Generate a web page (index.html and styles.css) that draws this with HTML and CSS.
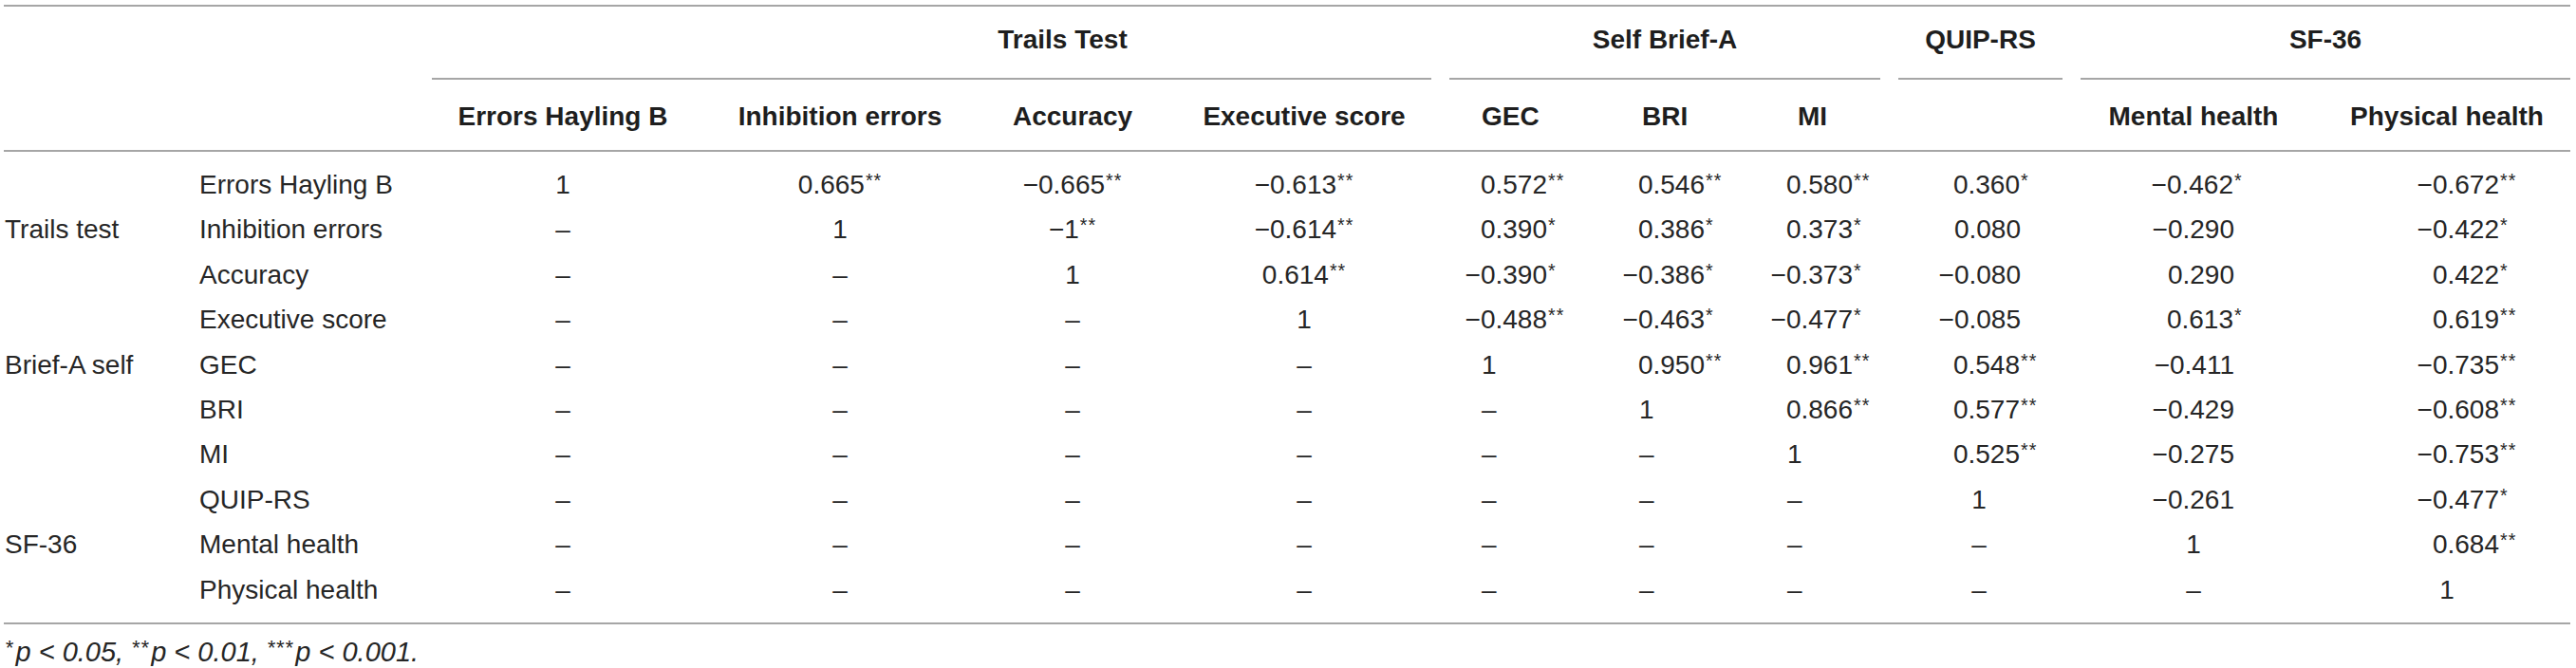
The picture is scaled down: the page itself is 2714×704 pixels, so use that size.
FILE: index.html
```html
<!DOCTYPE html>
<html lang="en">
<head>
<meta charset="utf-8">
<title>Correlation table</title>
<link rel="stylesheet" href="styles.css">
</head>
<body>
<div class="tbl">
  <div class="grp-row">
    <div class="grp-empty"></div>
    <div class="grp trails"><div class="gt">Trails Test</div><div class="rule"></div></div>
    <div class="grp self"><div class="gt">Self Brief-A</div><div class="rule"></div></div>
    <div class="grp quip"><div class="gt">QUIP-RS</div><div class="rule"></div></div>
    <div class="grp sf"><div class="gt">SF-36</div><div class="rule"></div></div>
  </div>
  <div class="hdr-row">
    <div></div><div></div>
    <div class="ctr">Errors Hayling B</div>
    <div class="ctr">Inhibition errors</div>
    <div class="ctr">Accuracy</div>
    <div class="ctr">Executive score</div>
    <div class="hl">GEC</div>
    <div class="hl">BRI</div>
    <div class="hl">MI</div>
    <div></div>
    <div class="ctr">Mental health</div>
    <div class="ctr ph-h">Physical health</div>
  </div>
  <div class="body">
    <div class="row">
      <div class="gl"></div><div class="rl">Errors Hayling B</div>
      <div class="ctr">1</div>
      <div class="ctr">0.665<sup>**</sup></div>
      <div class="ctr">−0.665<sup>**</sup></div>
      <div class="ctr">−0.613<sup>**</sup></div>
      <div class="g n">0.572<sup>**</sup></div>
      <div class="br n">0.546<sup>**</sup></div>
      <div class="mi n">0.580<sup>**</sup></div>
      <div class="q n">0.360<sup>*</sup></div>
      <div class="mh n">−0.462<sup>*</sup></div>
      <div class="ph n">−0.672<sup>**</sup></div>
    </div>
    <div class="row">
      <div class="gl">Trails test</div><div class="rl">Inhibition errors</div>
      <div class="ctr">–</div>
      <div class="ctr">1</div>
      <div class="ctr">−1<sup>**</sup></div>
      <div class="ctr">−0.614<sup>**</sup></div>
      <div class="g n">0.390<sup>*</sup></div>
      <div class="br n">0.386<sup>*</sup></div>
      <div class="mi n">0.373<sup>*</sup></div>
      <div class="q n">0.080</div>
      <div class="mh n">−0.290</div>
      <div class="ph n">−0.422<sup>*</sup></div>
    </div>
    <div class="row">
      <div class="gl"></div><div class="rl">Accuracy</div>
      <div class="ctr">–</div>
      <div class="ctr">–</div>
      <div class="ctr">1</div>
      <div class="ctr">0.614<sup>**</sup></div>
      <div class="g n">−0.390<sup>*</sup></div>
      <div class="br n">−0.386<sup>*</sup></div>
      <div class="mi n">−0.373<sup>*</sup></div>
      <div class="q n">−0.080</div>
      <div class="mh n">0.290</div>
      <div class="ph n">0.422<sup>*</sup></div>
    </div>
    <div class="row">
      <div class="gl"></div><div class="rl">Executive score</div>
      <div class="ctr">–</div>
      <div class="ctr">–</div>
      <div class="ctr">–</div>
      <div class="ctr">1</div>
      <div class="g n">−0.488<sup>**</sup></div>
      <div class="br n">−0.463<sup>*</sup></div>
      <div class="mi n">−0.477<sup>*</sup></div>
      <div class="q n">−0.085</div>
      <div class="mh n">0.613<sup>*</sup></div>
      <div class="ph n">0.619<sup>**</sup></div>
    </div>
    <div class="row">
      <div class="gl">Brief-A self</div><div class="rl">GEC</div>
      <div class="ctr">–</div>
      <div class="ctr">–</div>
      <div class="ctr">–</div>
      <div class="ctr">–</div>
      <div class="g u">1</div>
      <div class="br n">0.950<sup>**</sup></div>
      <div class="mi n">0.961<sup>**</sup></div>
      <div class="q n">0.548<sup>**</sup></div>
      <div class="mh n">−0.411</div>
      <div class="ph n">−0.735<sup>**</sup></div>
    </div>
    <div class="row">
      <div class="gl"></div><div class="rl">BRI</div>
      <div class="ctr">–</div>
      <div class="ctr">–</div>
      <div class="ctr">–</div>
      <div class="ctr">–</div>
      <div class="g u">–</div>
      <div class="br u">1</div>
      <div class="mi n">0.866<sup>**</sup></div>
      <div class="q n">0.577<sup>**</sup></div>
      <div class="mh n">−0.429</div>
      <div class="ph n">−0.608<sup>**</sup></div>
    </div>
    <div class="row">
      <div class="gl"></div><div class="rl">MI</div>
      <div class="ctr">–</div>
      <div class="ctr">–</div>
      <div class="ctr">–</div>
      <div class="ctr">–</div>
      <div class="g u">–</div>
      <div class="br u">–</div>
      <div class="mi u">1</div>
      <div class="q n">0.525<sup>**</sup></div>
      <div class="mh n">−0.275</div>
      <div class="ph n">−0.753<sup>**</sup></div>
    </div>
    <div class="row">
      <div class="gl"></div><div class="rl">QUIP-RS</div>
      <div class="ctr">–</div>
      <div class="ctr">–</div>
      <div class="ctr">–</div>
      <div class="ctr">–</div>
      <div class="g u">–</div>
      <div class="br u">–</div>
      <div class="mi u">–</div>
      <div class="q u">1</div>
      <div class="mh n">−0.261</div>
      <div class="ph n">−0.477<sup>*</sup></div>
    </div>
    <div class="row">
      <div class="gl">SF-36</div><div class="rl">Mental health</div>
      <div class="ctr">–</div>
      <div class="ctr">–</div>
      <div class="ctr">–</div>
      <div class="ctr">–</div>
      <div class="g u">–</div>
      <div class="br u">–</div>
      <div class="mi u">–</div>
      <div class="q u">–</div>
      <div class="mh u">1</div>
      <div class="ph n">0.684<sup>**</sup></div>
    </div>
    <div class="row">
      <div class="gl"></div><div class="rl">Physical health</div>
      <div class="ctr">–</div>
      <div class="ctr">–</div>
      <div class="ctr">–</div>
      <div class="ctr">–</div>
      <div class="g u">–</div>
      <div class="br u">–</div>
      <div class="mi u">–</div>
      <div class="q u">–</div>
      <div class="mh u">–</div>
      <div class="ph u">1</div>
    </div>
  </div>
</div>
<p class="note"><sup>*</sup>p &lt; 0.05, <sup>**</sup>p &lt; 0.01, <sup>***</sup>p &lt; 0.001.</p>
</body>
</html>
```

FILE: styles.css
```css
:root {
  --cols: 196px 255px 276px 308px 182px 306px 169px 164px 140px 192px 238px 278px;
  --rule: #a6a6a6;
  --ink: #262626;
}

html, body {
  margin: 0;
  padding: 0;
  background: #ffffff;
}

body {
  font-family: "Liberation Sans", Arial, sans-serif;
  font-size: 28px;
  color: var(--ink);
}

.tbl {
  width: 2704px;
  margin: 5px 0 0 4px;
  border-top: 2px solid var(--rule);
}

/* group header row */
.grp-row {
  display: grid;
  grid-template-columns: 451px 1072px 473px 192px 516px;
}

.grp {
  display: flex;
  flex-direction: column;
  padding-right: 19px;
  font-weight: bold;
}

.grp.sf {
  padding-right: 0;
}

.gt {
  height: 70px;
  padding-bottom: 5px;
  display: flex;
  align-items: center;
  justify-content: center;
  color: #1e1e1e;
}

.trails .gt {
  padding-left: 276px;
  padding-right: 0;
}

.rule {
  height: 2px;
  background: var(--rule);
}

/* column header row */
.hdr-row {
  display: grid;
  grid-template-columns: var(--cols);
  height: 70px;
  padding-top: 4px;
  align-items: center;
  font-weight: bold;
  color: #1e1e1e;
  border-bottom: 2px solid var(--rule);
  white-space: nowrap;
}

.hdr-row .hl {
  padding-left: 34px;
}

.hdr-row .ph-h {
  padding-left: 18px;
}

/* body */
.body {
  padding: 11px 0;
  border-bottom: 2px solid var(--rule);
}

.row {
  display: grid;
  grid-template-columns: var(--cols);
  height: 47.4px;
  line-height: 47.4px;
  white-space: nowrap;
}

.gl {
  padding-left: 1px;
}

.rl {
  padding-left: 10px;
}

.ctr {
  text-align: center;
}

sup {
  font-size: 0.7em;
  line-height: 0;
  vertical-align: 7px;
  letter-spacing: 1px;
  padding-left: 1px;
}

.n {
  text-align: right;
}

.n sup {
  display: inline-block;
  width: 0;
  overflow: visible;
}

.g.n { padding-right: 65px; }
.g.u { padding-left: 34px; }
.br.n { padding-right: 63px; }
.br.u { padding-left: 31px; }
.mi.n { padding-right: 47px; }
.mi.u { padding-left: 23px; }
.q.n { padding-right: 63px; }
.q.u { text-align: center; padding-right: 22px; }
.mh.n { padding-right: 76px; }
.mh.u { text-align: center; }
.ph.n { padding-right: 74px; }
.ph.u { text-align: center; padding-left: 18px; }

.note {
  margin: 14px 0 0 5px;
  line-height: 30px;
  font-style: italic;
  font-size: 29px;
}

.note sup {
  font-size: 0.75em;
  letter-spacing: 1px;
  padding-left: 0;
  padding-right: 2px;
}
```
